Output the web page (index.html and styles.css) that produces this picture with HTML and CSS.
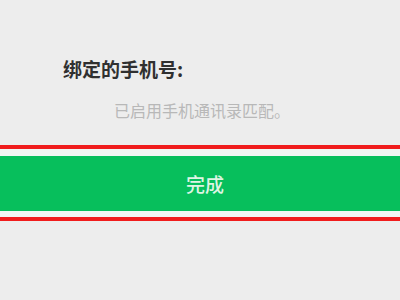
FILE: index.html
```html
<!DOCTYPE html>
<html lang="zh-CN">

<head>
    <meta charset="UTF-8">
    <meta name="viewport" content="width=device-width, initial-scale=1.0">
    <title>绑定的手机号</title>
    <link rel="stylesheet" href="styles.css">
</head>

<body>
    <div class="info">
        <h1 class="info-title">绑定的手机号:</h1>
        <p class="info-hint">已启用手机通讯录匹配。</p>
    </div>

    <div class="frame">
        <button class="done-btn">完成</button>
    </div>
</body>

</html>
```

FILE: styles.css
```css
body {
    margin: 0;
    background: #ededed;
    font-family: "Noto Sans CJK SC", "Noto Sans", sans-serif;
    height: 300px;
    overflow: hidden;
}

.info {
    padding: 57px 0 0 0;
}

.info-title {
    margin: 0 0 0 63px;
    font-size: 19px;
    line-height: 24px;
    font-weight: 700;
    color: #303030;
}

.info-hint {
    margin: 19px 0 0 0;
    padding-left: 4px;
    text-align: center;
    font-size: 16px;
    line-height: 20px;
    color: #b8b8b8;
}

.frame {
    margin-top: 25px;
    border-top: 4px solid #f01c1c;
    border-bottom: 4px solid #f01c1c;
    padding: 7px 0 6px;
    background: #f1f6f3;
}

.done-btn {
    display: block;
    width: 100%;
    height: 55px;
    border: none;
    background: #07bf5c;
    color: #dff5e4;
    font-family: inherit;
    font-size: 19px;
    font-weight: 500;
    padding: 0 0 0 10px;
}
```
